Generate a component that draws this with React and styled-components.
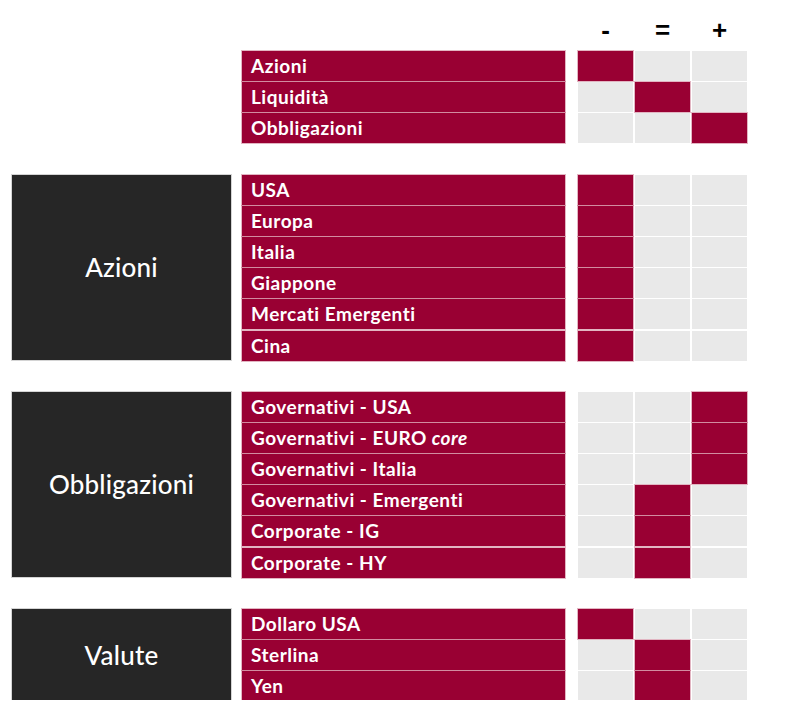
import styled, { createGlobalStyle } from "styled-components";

const GlobalStyle = createGlobalStyle`
  body {
    margin: 0;
    background: #ffffff;
    font-family: Lato, "Open Sans", sans-serif;
  }
`;

const COLOR = {
  wine: "#990033",
  dark: "#262626",
  cell: "#e9e9e9",
};

const SECTIONS = [
  {
    title: "",
    rows: [
      { label: "Azioni", value: -1 },
      { label: "Liquidità", value: 0 },
      { label: "Obbligazioni", value: 1 },
    ],
  },
  {
    title: "Azioni",
    rows: [
      { label: "USA", value: -1 },
      { label: "Europa", value: -1 },
      { label: "Italia", value: -1 },
      { label: "Giappone", value: -1 },
      { label: "Mercati Emergenti", value: -1 },
      { label: "Cina", value: -1 },
    ],
  },
  {
    title: "Obbligazioni",
    rows: [
      { label: "Governativi - USA", value: 1 },
      { label: "Governativi - EURO", italic: "core", value: 1 },
      { label: "Governativi - Italia", value: 1 },
      { label: "Governativi - Emergenti", value: 0 },
      { label: "Corporate - IG", value: 0 },
      { label: "Corporate - HY", value: 0 },
    ],
  },
  {
    title: "Valute",
    rows: [
      { label: "Dollaro USA", value: -1 },
      { label: "Sterlina", value: 0 },
      { label: "Yen", value: 0 },
    ],
  },
];

const App = () => {
  return (
    <>
      <GlobalStyle />
      <Page>
        <Header>
          <Symbol>-</Symbol>
          <Symbol>=</Symbol>
          <Symbol>+</Symbol>
        </Header>
        {SECTIONS.map((section, i) => (
          <Section key={i}>
            <Category $blank={!section.title}>{section.title}</Category>
            <Rows>
              {section.rows.map((row) => (
                <Row key={row.label}>
                  <Label>
                    {row.label}
                    {row.italic && <em> {row.italic}</em>}
                  </Label>
                  {[-1, 0, 1].map((v) => (
                    <Cell key={v} $on={row.value === v} />
                  ))}
                </Row>
              ))}
            </Rows>
          </Section>
        ))}
      </Page>
    </>
  );
};

export default App;

const Page = styled.main`
  width: 800px;
  padding: 0 0 0 12px;
  box-sizing: border-box;
  display: flex;
  flex-direction: column;
  gap: 32px;
`;

const Header = styled.div`
  height: 51px;
  margin-bottom: -32px;
  padding-left: 566px;
  display: grid;
  grid-template-columns: repeat(3, 55px);
  column-gap: 2px;
  align-items: center;
  padding-top: 8px;
  box-sizing: border-box;
`;

const Symbol = styled.span`
  text-align: center;
  font-family: "Liberation Sans", Arial, sans-serif;
  font-weight: 700;
  font-size: 26px;
  line-height: 1;
  color: #000000;
`;

const Section = styled.section`
  display: flex;
  align-items: stretch;
`;

const Category = styled.div`
  width: 219px;
  margin-right: 11px;
  flex-shrink: 0;
  display: flex;
  align-items: center;
  justify-content: center;
  background: ${(p) => (p.$blank ? "transparent" : COLOR.dark)};
  box-shadow: ${(p) => (p.$blank ? "none" : "0 0 0 1px #d4d4d4")};
  color: #ffffff;
  font-size: 26px;
  font-weight: 500;
  letter-spacing: 0.2px;
`;

const Rows = styled.div`
  display: flex;
  flex-direction: column;
  gap: 2px;
`;

const Row = styled.div`
  height: 29.2px;
  display: grid;
  grid-template-columns: 334px 55px 55px 55px;
  column-gap: 2px;
`;

const Label = styled.div`
  margin-right: 11px;
  background: ${COLOR.wine};
  box-shadow: 0 0 0 1px rgba(190, 90, 120, 0.45);
  color: #ffffff;
  font-size: 19px;
  font-weight: 700;
  letter-spacing: 0.5px;
  line-height: 30px;
  padding-left: 9px;
  white-space: nowrap;

  em {
    font-style: italic;
  }
`;

const Cell = styled.div`
  background: ${(p) => (p.$on ? COLOR.wine : COLOR.cell)};
  box-shadow: ${(p) =>
    p.$on ? "0 0 0 1px rgba(190, 90, 120, 0.45)" : "none"};
`;
